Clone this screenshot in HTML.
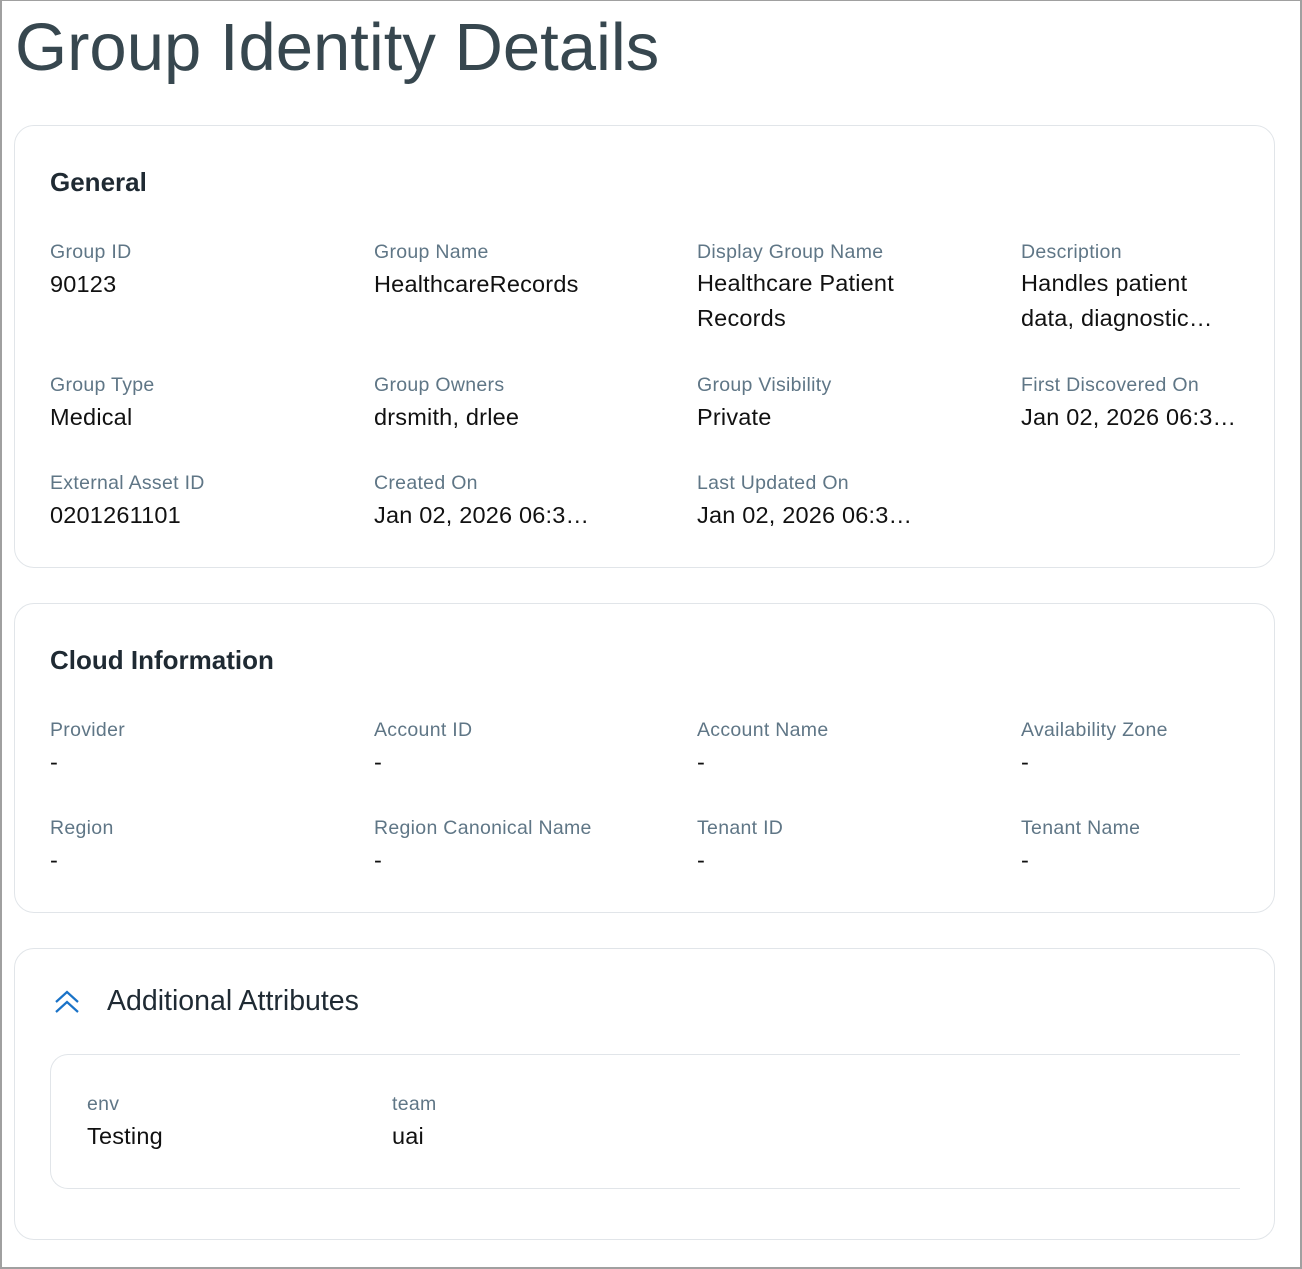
<!DOCTYPE html>
<html><head><meta charset="utf-8"><style>
*{margin:0;padding:0;box-sizing:border-box}
html,body{width:1302px;height:1269px;background:#fff;overflow:hidden}
body{font-family:"Liberation Sans",sans-serif;position:relative}
.frame{position:absolute;left:0;top:0;width:1302px;height:1269px;border:2px solid #a0a0a0;border-top-width:1px}
.t{position:absolute;white-space:nowrap;line-height:30px}
h1{position:absolute;left:15px;top:8px;font-size:67px;font-weight:normal;color:#37474f;line-height:80px;letter-spacing:0px}
.card{position:absolute;left:14px;width:1261px;border:1px solid #e1e5e9;border-radius:20px;background:#fff}
.h{font-size:26px;font-weight:bold;color:#1f2a33}
.l{font-size:19.5px;color:#5f7686;letter-spacing:0.3px}
.v{font-size:23.5px;color:#111;letter-spacing:0.2px}
.inner{position:absolute;left:50px;top:1054px;width:1210px;height:135px;border:1px solid #e1e5e9;border-right:none;border-radius:18px 0 0 18px}
.cover{position:absolute;left:1240px;top:1050px;width:30px;height:145px;background:#fff}
</style></head><body>
<div class="frame"></div>
<h1>Group Identity Details</h1>

<div class="card" style="top:125px;height:443px"></div>
<div class="card" style="top:603px;height:310px"></div>
<div class="card" style="top:948px;height:292px"></div>
<div class="inner"></div><div class="cover"></div>

<div class="t h" style="left:50px;top:167px">General</div>
<div class="t l" style="left:50px;top:237px">Group ID</div>
<div class="t v" style="left:50px;top:269px">90123</div>
<div class="t l" style="left:374px;top:237px">Group Name</div>
<div class="t v" style="left:374px;top:269px">HealthcareRecords</div>
<div class="t l" style="left:697px;top:237px">Display Group Name</div>
<div class="t v" style="left:697px;top:266px;line-height:35px">Healthcare Patient<br>Records</div>
<div class="t l" style="left:1021px;top:237px">Description</div>
<div class="t v" style="left:1021px;top:266px;line-height:35px">Handles patient<br>data, diagnostic…</div>

<div class="t l" style="left:50px;top:370px">Group Type</div>
<div class="t v" style="left:50px;top:402px">Medical</div>
<div class="t l" style="left:374px;top:370px">Group Owners</div>
<div class="t v" style="left:374px;top:402px">drsmith, drlee</div>
<div class="t l" style="left:697px;top:370px">Group Visibility</div>
<div class="t v" style="left:697px;top:402px">Private</div>
<div class="t l" style="left:1021px;top:370px">First Discovered On</div>
<div class="t v" style="left:1021px;top:402px">Jan 02, 2026 06:3…</div>

<div class="t l" style="left:50px;top:468px">External Asset ID</div>
<div class="t v" style="left:50px;top:500px">0201261101</div>
<div class="t l" style="left:374px;top:468px">Created On</div>
<div class="t v" style="left:374px;top:500px">Jan 02, 2026 06:3…</div>
<div class="t l" style="left:697px;top:468px">Last Updated On</div>
<div class="t v" style="left:697px;top:500px">Jan 02, 2026 06:3…</div>

<div class="t h" style="left:50px;top:645px">Cloud Information</div>
<div class="t l" style="left:50px;top:715px">Provider</div>
<div class="t v" style="left:50px;top:747px">-</div>
<div class="t l" style="left:374px;top:715px">Account ID</div>
<div class="t v" style="left:374px;top:747px">-</div>
<div class="t l" style="left:697px;top:715px">Account Name</div>
<div class="t v" style="left:697px;top:747px">-</div>
<div class="t l" style="left:1021px;top:715px">Availability Zone</div>
<div class="t v" style="left:1021px;top:747px">-</div>
<div class="t l" style="left:50px;top:813px">Region</div>
<div class="t v" style="left:50px;top:845px">-</div>
<div class="t l" style="left:374px;top:813px">Region Canonical Name</div>
<div class="t v" style="left:374px;top:845px">-</div>
<div class="t l" style="left:697px;top:813px">Tenant ID</div>
<div class="t v" style="left:697px;top:845px">-</div>
<div class="t l" style="left:1021px;top:813px">Tenant Name</div>
<div class="t v" style="left:1021px;top:845px">-</div>

<svg style="position:absolute;left:54px;top:989px" width="28" height="26" viewBox="0 0 28 26">
<path d="M2 13 L13 3 L24 13 M2 23 L13 13 L24 23" fill="none" stroke="#1a73c8" stroke-width="2.2"/>
</svg>
<div class="t" style="left:107px;top:986px;font-size:28.5px;color:#1f2a33">Additional Attributes</div>

<div class="t l" style="left:87px;top:1089px">env</div>
<div class="t v" style="left:87px;top:1121px">Testing</div>
<div class="t l" style="left:392px;top:1089px">team</div>
<div class="t v" style="left:392px;top:1121px">uai</div>
</body></html>
